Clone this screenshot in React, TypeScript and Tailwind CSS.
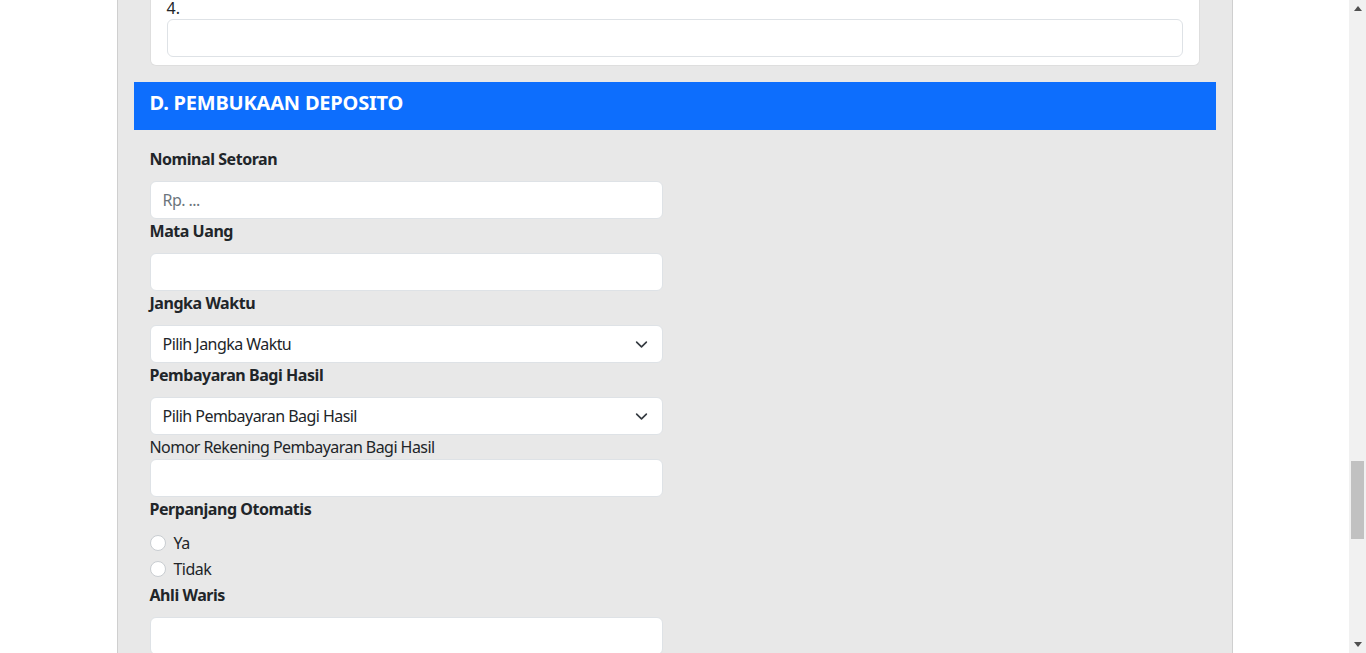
import React from "react";

const font = { fontFamily: '"Noto Sans", "Open Sans", sans-serif' };

function Label({ children, bold = true }: { children: React.ReactNode; bold?: boolean }) {
  return (
    <div
      className={`h-6 leading-6 text-[16px] text-[#212529] ${
        bold ? "font-bold mb-[10px] tracking-[-0.45px]" : "font-normal tracking-[-0.55px]"
      }`}
    >
      {children}
    </div>
  );
}

function Input({ placeholder }: { placeholder?: string }) {
  return (
    <div className="h-[38px] w-[513px] rounded-[6px] border border-[#dee2e6] bg-white px-3 flex items-center text-[16px] tracking-[-0.55px] text-[#6c757d]">
      {placeholder}
    </div>
  );
}

function Select({ text }: { text: string }) {
  return (
    <div className="h-[38px] w-[513px] rounded-[6px] border border-[#dee2e6] bg-white pl-3 pr-[14px] flex items-center justify-between text-[16px] tracking-[-0.55px] text-[#212529]">
      <span>{text}</span>
      <svg width="13" height="13" viewBox="0 0 16 16" fill="none" stroke="#343a40" strokeWidth="2" strokeLinecap="round" strokeLinejoin="round">
        <path d="M2 5l6 6 6-6" />
      </svg>
    </div>
  );
}

function Radio({ label }: { label: string }) {
  return (
    <div className="h-6 flex items-center gap-2 mb-[2px]">
      <span className="w-4 h-4 rounded-full border border-[#c9cdd1] bg-white" />
      <span className="text-[16px] text-[#212529] leading-6 tracking-[-0.55px]">{label}</span>
    </div>
  );
}

export default function App() {
  return (
    <div className="h-[653px] w-[1366px] overflow-hidden flex bg-white" style={font}>
      <div className="flex-1 flex justify-center">
        <div className="w-[1116px] h-full bg-[#e8e8e8] border-x border-[#cfcfcf] px-4">
          <div className="px-4">
            <div className="bg-white border border-t-0 border-[#dedede] rounded-b-[6px] px-4 pb-2">
              <div className="h-5 leading-6 -mt-[4px] text-[16px] text-[#212529] mb-[3px]">4.</div>
              <div className="h-[38px] rounded-[6px] border border-[#dee2e6] bg-white" />
            </div>
          </div>
          <div className="mt-4 h-12 bg-[#0d6efd] flex items-start pt-[7px] px-4">
            <span className="text-white font-bold text-[20px] leading-7 tracking-[-0.2px]">D. PEMBUKAAN DEPOSITO</span>
          </div>
          <div className="px-4 pt-[17px]">
            <Label>Nominal Setoran</Label>
            <Input placeholder="Rp. ..." />
            <Label>Mata Uang</Label>
            <Input />
            <Label>Jangka Waktu</Label>
            <Select text="Pilih Jangka Waktu" />
            <Label>Pembayaran Bagi Hasil</Label>
            <Select text="Pilih Pembayaran Bagi Hasil" />
            <Label bold={false}>Nomor Rekening Pembayaran Bagi Hasil</Label>
            <Input />
            <Label>Perpanjang Otomatis</Label>
            <Radio label="Ya" />
            <Radio label="Tidak" />
            <Label>Ahli Waris</Label>
            <Input />
          </div>
        </div>
      </div>
      <div className="w-[17px] h-full bg-[#f1f1f1] flex flex-col items-center">
        <div className="h-[17px] flex items-center justify-center">
          <svg width="8" height="5" viewBox="0 0 8 5"><path d="M0 5L4 0L8 5Z" fill="#505050" /></svg>
        </div>
        <div className="mt-[444px] w-[13px] h-[78px] bg-[#c1c1c1]" />
        <div className="flex-1" />
        <div className="h-[17px] flex items-center justify-center">
          <svg width="8" height="5" viewBox="0 0 8 5"><path d="M0 0L4 5L8 0Z" fill="#505050" /></svg>
        </div>
      </div>
    </div>
  );
}
